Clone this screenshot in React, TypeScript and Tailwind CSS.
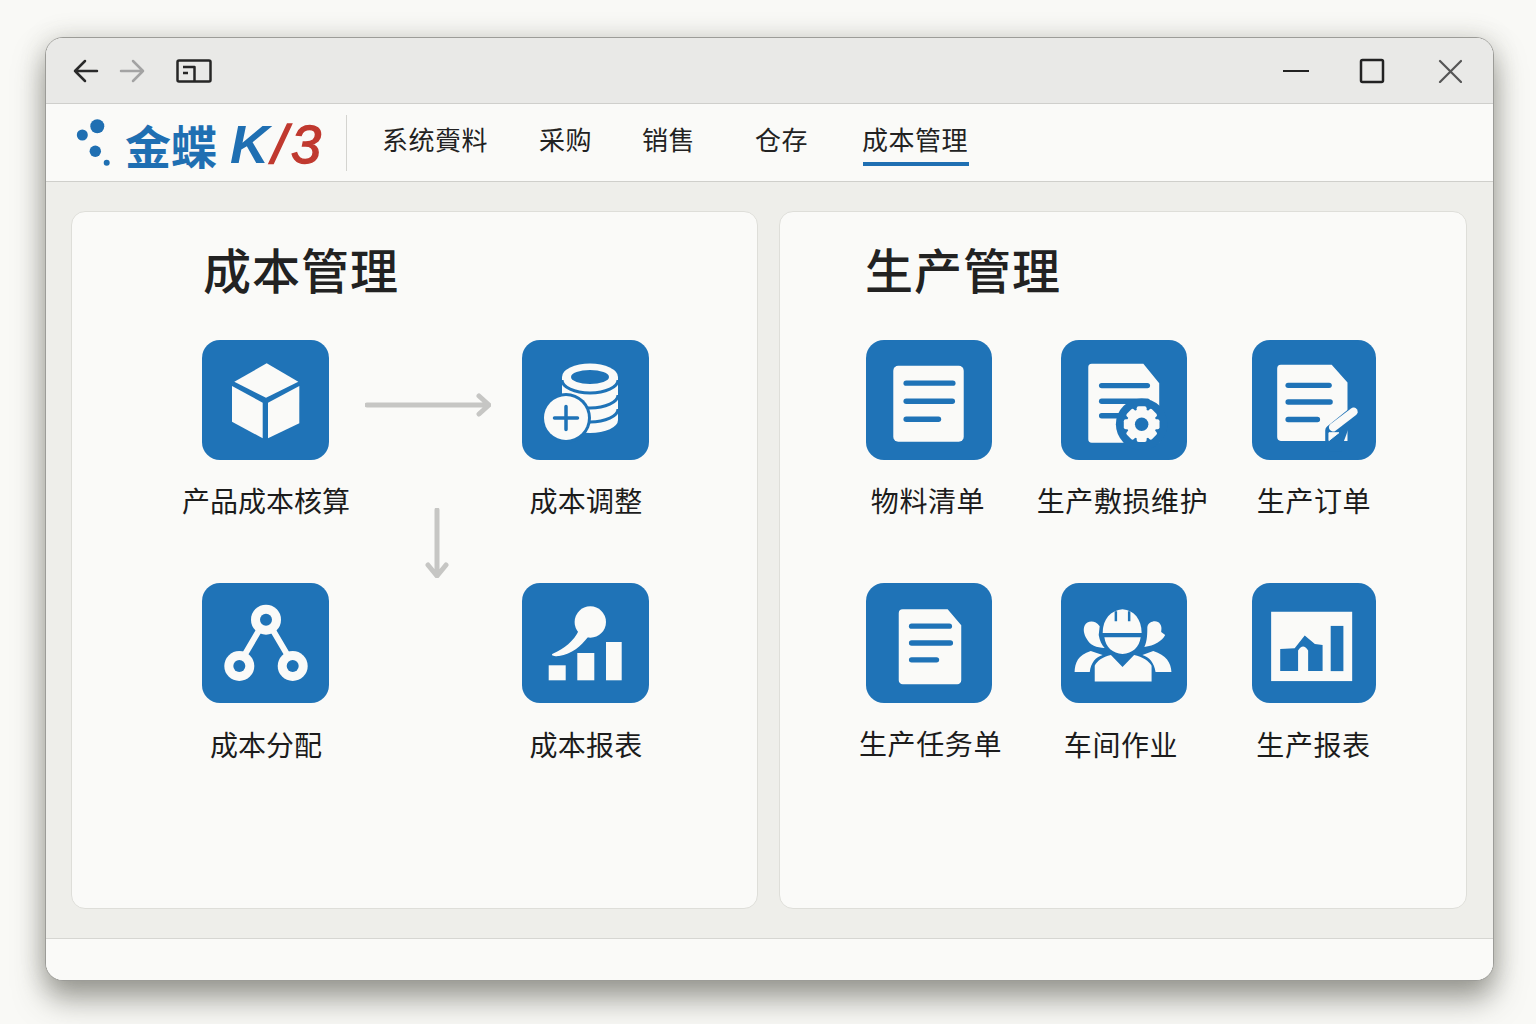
import type { ReactNode } from "react";

const BLUE = "#1f73b7";
const WHITE = "#fafaf8";

const DocLines = ({ x, ys, ends }: { x: number; ys: number[]; ends: number[] }) => (
  <>
    {ys.map((y, i) => (
      <line key={i} x1={x} y1={y} x2={ends[i]} y2={y} stroke={BLUE} strokeWidth="5.5" strokeLinecap="round" />
    ))}
  </>
);

const CubeIcon = () => (
  <g fill={WHITE}>
    <path d="M64.7 23.3 96.3 41.7 64 57.7 32.3 41.7Z" />
    <path d="M30 46 60.7 62.7V98.3L30 81.7Z" />
    <path d="M66 62.7 97.3 46V83.3L66 98.3Z" />
  </g>
);

const DatabaseIcon = () => (
  <>
    <path d="M40 37V80A28 13 0 0 0 96 80V37Z" fill={WHITE} />
    <ellipse cx="68" cy="37" rx="28" ry="13.5" fill={WHITE} />
    <ellipse cx="68" cy="37" rx="19" ry="7" fill={BLUE} />
    <g fill="none" stroke={BLUE} strokeWidth="3">
      <path d="M40 40A28 13 0 0 0 96 40" />
      <path d="M40 55A28 13 0 0 0 96 55" />
      <path d="M40 69A28 13 0 0 0 96 69" />
    </g>
    <circle cx="44" cy="78" r="25" fill={BLUE} />
    <circle cx="44" cy="78" r="22" fill={WHITE} />
    <path d="M32.5 78H55.5M44 66.5V89.5" stroke={BLUE} strokeWidth="3.5" strokeLinecap="round" />
  </>
);

const GraphIcon = () => (
  <>
    <path d="M59 44 39 78M69 44 89 78" stroke={WHITE} strokeWidth="6" />
    {[
      [64, 36.7],
      [37.3, 83],
      [90.7, 83],
    ].map(([cx, cy]) => (
      <g key={cx}>
        <circle cx={cx} cy={cy} r="15" fill={WHITE} />
        <circle cx={cx} cy={cy} r="6" fill={BLUE} />
      </g>
    ))}
  </>
);

const PinChartIcon = () => (
  <g fill={WHITE}>
    <circle cx="68.3" cy="39" r="15.7" />
    <path d="M57 47C52 58 42 66 30.7 70.7 28 72.5 33 73.5 37 73 50 71 59 63 66 54Z" />
    <rect x="26.7" y="82.3" width="17" height="15" />
    <rect x="55.3" y="70" width="17" height="27.3" />
    <rect x="84" y="59" width="15.7" height="38.3" />
  </g>
);

const ListIcon = () => (
  <>
    <rect x="27.5" y="25.5" width="71" height="76.5" rx="5" fill={WHITE} />
    <DocLines x={40.5} ys={[43, 61.3, 79.5]} ends={[87.5, 87, 73]} />
  </>
);

const GearDocIcon = () => (
  <>
    <path d="M31 23.4H83L99 43V103H31A3.5 3.5 0 0 1 27.5 99.5V27A3.5 3.5 0 0 1 31 23.4Z" fill={WHITE} />
    <DocLines x={41} ys={[45.5, 61.3, 75.8]} ends={[87, 87, 70]} />
    <circle cx="81.3" cy="84.4" r="26" fill={BLUE} />
    <g fill={WHITE}>
      {[0, 45, 90, 135, 180, 225, 270, 315].map((a) => (
        <rect key={a} x="76.3" y="66.4" width="10" height="8" rx="2" transform={`rotate(${a} 81.3 84.4)`} />
      ))}
      <circle cx="81.3" cy="84.4" r="15" />
    </g>
    <circle cx="81.3" cy="84.4" r="6.8" fill={BLUE} />
  </>
);

const PenDocIcon = () => (
  <>
    <path d="M29.5 24H81.6L97.8 42V102H29.5A4 4 0 0 1 25.8 98V28A4 4 0 0 1 29.5 24Z" fill={WHITE} />
    <DocLines x={37} ys={[45, 62, 80]} ends={[79, 80, 67]} />
    <path d="M106 70 80 91V108H92" fill={BLUE} stroke={BLUE} strokeWidth="10" strokeLinejoin="round" />
    <path d="M104 72 83 88" stroke={WHITE} strokeWidth="8.5" strokeLinecap="round" />
    <path d="M78.8 101.6V93.5H89Z" fill={WHITE} stroke={WHITE} strokeWidth="1" strokeLinejoin="round" />
  </>
);

const SmallDocIcon = () => (
  <>
    <path d="M37 26H82.3L96 42V97.5A4 4 0 0 1 92 101.6H37A4 4 0 0 1 33 97.5V30A4 4 0 0 1 37 26Z" fill={WHITE} />
    <DocLines x={46} ys={[43, 60, 77]} ends={[84, 85, 71]} />
  </>
);

const WorkersIcon = () => (
  <>
    <g fill={WHITE}>
      <path d="M24 42C26 38 34 36 39 43L38 52C39 58 41 62 44 65 36 65 29 62 26 56 23 51 22 46 24 42Z" />
      <path d="M13.7 89.3C14 80 17 72 30 68L42 72C35 74 30 80 29 89.3Z" />
      <path d="M87 44C88 38 97 36 100 41 102 44 101 47 101 49L105 52C102 58 94 63 84 64 87 58 87 50 87 44Z" />
      <path d="M111.3 89.3C111 80 106 72 93 68L82 72C89 74 94 80 95.3 89.3Z" />
      <path d="M42 50C42 36 50 27 62 26 74 27 81 36 81.3 50Z" />
      <path d="M43.7 54.3H80.3C79 64 72 71 62 71 52 71 45 64 43.7 54.3Z" />
      <path d="M34 98.7V83C36 78 42 74 50.3 72L62 84.3 73.7 72C82 74 89 78 91.3 83V98.7Z" />
    </g>
    <path d="M55.3 28V38M68.7 28V38" stroke={BLUE} strokeWidth="2.5" />
  </>
);

const WindowChartIcon = () => (
  <>
    <rect x="19.6" y="28" width="83" height="71" fill={WHITE} />
    <g fill={BLUE}>
      <rect x="80.6" y="42.5" width="13" height="46.3" />
      <path d="M28.9 66.1 43.7 65.4 54 52.3 64.4 61 72.3 62V88.8H57.5V67.8Q52.3 59.2 47.2 67.8V88.8H28.9Z" />
    </g>
  </>
);

const Tile = ({ icon, label, labelClass = "", w = "w-[127px]" }: { icon: ReactNode; label: string; labelClass?: string; w?: string }) => (
  <div className="flex flex-col items-center">
    <div className={`${w} h-[120px] rounded-[18px] bg-[#1f73b7]`}>
      <svg viewBox="0 0 127 120" className="size-full">
        {icon}
      </svg>
    </div>
    <span className={`mt-[21px] whitespace-nowrap text-[28px] leading-[40px] text-[#1c1c1c] ${labelClass}`}>{label}</span>
  </div>
);

const navItems = [
  { label: "系统賫料", cls: "ml-[35px]" },
  { label: "采购", cls: "ml-[51px]" },
  { label: "销售", cls: "ml-[50px]" },
  { label: "仓存", cls: "ml-[60px]" },
  { label: "成本管理", cls: "ml-[54px]", active: true },
];

export default function App() {
  return (
    <div className="h-screen overflow-hidden bg-[#f9f9f6] pl-[45px] pt-[37px] font-['Noto_Sans_CJK_SC','Liberation_Sans',sans-serif]">
      <div className="flex h-[944px] w-[1449px] flex-col overflow-hidden rounded-[18px] border border-[#9c9c98] bg-[#fafaf8] shadow-[0_18px_30px_rgba(70,70,60,0.5),0_0_26px_rgba(70,70,60,0.18)]">
        {/* title bar */}
        <div className="flex h-[66px] shrink-0 items-center border-b border-[#cfcfcc] bg-[#e9e9e7]">
          <svg viewBox="0 0 26 24" className="ml-[27px] h-6 w-[26px]" fill="none" stroke="#2a2a2a" strokeWidth="2.5" strokeLinecap="round" strokeLinejoin="round">
            <path d="M24 12H2M12 2 2 12 12 22" />
          </svg>
          <svg viewBox="0 0 26 24" className="ml-[20px] h-6 w-[26px]" fill="none" stroke="#a3a3a3" strokeWidth="2.5" strokeLinecap="round" strokeLinejoin="round">
            <path d="M2 12H24M14 2 24 12 14 22" />
          </svg>
          <svg viewBox="0 0 36 24" className="ml-[31px] h-6 w-9" fill="none" stroke="#262626" strokeWidth="2.5" strokeLinejoin="round">
            <rect x="1.5" y="1.5" width="33" height="21" rx="1.5" />
            <path d="M7 8H18.5V22M7 14H12" />
          </svg>
          <svg viewBox="0 0 26 4" className="ml-auto h-1 w-[26px]" stroke="#222">
            <path d="M0 2H26" strokeWidth="2" />
          </svg>
          <svg viewBox="0 0 26 26" className="ml-[50px] h-[26px] w-[26px]" fill="none" stroke="#222" strokeWidth="2.5">
            <rect x="2" y="2" width="22" height="22" rx="1.5" />
          </svg>
          <svg viewBox="0 0 24 24" className="ml-[53px] mr-[31px] size-6" fill="none" stroke="#555" strokeWidth="2.2" strokeLinecap="round">
            <path d="M2 2 23 23M23 2 2 23" />
          </svg>
        </div>

        {/* menu bar */}
        <div className="flex h-[78px] shrink-0 items-center border-b border-[#cfcfcb] bg-[#fafaf8]">
          <svg viewBox="0 0 36 50" className="ml-[30px] h-[50px] w-9 shrink-0" fill="#1f6fb2">
            <circle cx="21.3" cy="8.3" r="7" />
            <circle cx="6.3" cy="17" r="5.5" />
            <circle cx="19.3" cy="33.3" r="5.7" />
            <circle cx="30.7" cy="44.7" r="3" />
          </svg>
          <div className="ml-[13px] mt-[3px] flex h-[56px] w-[221px] shrink-0 items-center whitespace-nowrap">
            <span className="text-[46px] font-bold leading-[56px] text-[#1f6fb2]">金蝶</span>
            <span className="ml-[13px] font-['Liberation_Sans',sans-serif] text-[54px] italic leading-[56px]">
              <span className="font-bold text-[#1f6fb2]">K</span>
              <span className="ml-[3px] text-[#c0392f] [-webkit-text-stroke:1.5px_#c0392f]">/</span>
              <span className="ml-[4px] text-[#c0392f] [-webkit-text-stroke:1.5px_#c0392f]">3</span>
            </span>
          </div>
          <div className="h-[56px] w-px shrink-0 bg-[#d4d4d0]" />
          {navItems.map((item) => (
            <div key={item.label} className={`relative mb-[8px] shrink-0 text-[26px] leading-[36px] tracking-[0.5px] text-[#222] ${item.cls}`}>
              {item.label}
              {item.active && <div className="absolute -bottom-[9px] left-px h-1 w-[106px] bg-[#1f6fb2]" />}
            </div>
          ))}
        </div>

        {/* panels */}
        <div className="flex h-[757px] shrink-0 gap-[21px] border-b border-[#d6d6d2] bg-[#eeeeea] pl-[25px] pt-[29px]">
          <div className="h-[698px] w-[687px] rounded-[14px] border border-[#deded9] bg-[#fafaf8] pt-[28px]">
            <h2 className="ml-[131px] text-[48px] font-medium leading-[56px] tracking-[1px] text-[#222]">成本管理</h2>
            <div className="ml-[110px] mt-[44px] grid grid-cols-[168px_156px_160px] grid-rows-[243px_243px]">
              <Tile icon={<CubeIcon />} label="产品成本核算" w="w-[127px] -ml-px" labelClass="-translate-y-px" />
              <svg viewBox="0 0 126 24" className="mt-[53px] h-6 w-[126px] justify-self-center" fill="none" stroke="#c6c6c4" strokeWidth="5" strokeLinecap="round" strokeLinejoin="round">
                <path d="M2 12H123M114 3 124 12 114 21" />
              </svg>
              <Tile icon={<DatabaseIcon />} label="成本调整" w="w-[127px] -ml-px" labelClass="-translate-y-px tracking-[0.3px]" />
              <Tile icon={<GraphIcon />} label="成本分配" w="w-[127px] -ml-px" />
              <svg viewBox="0 0 24 70" className="-mt-[75px] ml-[75px] h-[70px] w-6" fill="none" stroke="#c6c6c4" strokeWidth="5" strokeLinecap="round" strokeLinejoin="round">
                <path d="M12 2V67M3 57 12 68 21 57" />
              </svg>
              <Tile icon={<PinChartIcon />} label="成本报表" w="w-[127px] -ml-px" labelClass="tracking-[0.3px]" />
            </div>
          </div>

          <div className="h-[698px] w-[688px] rounded-[14px] border border-[#deded9] bg-[#fafaf8] pt-[28px]">
            <h2 className="ml-[85px] text-[48px] font-medium leading-[56px] tracking-[1px] text-[#222]">生产管理</h2>
            <div className="ml-[54px] mt-[44px] grid grid-cols-[190px_200px_180px] grid-rows-[243px_243px]">
              <Tile icon={<ListIcon />} label="物料清单" w="w-[126px]" labelClass="-ml-[2px] -translate-y-px tracking-[0.6px]" />
              <Tile icon={<GearDocIcon />} label="生产敷损维护" w="w-[126px]" labelClass="-ml-[3px] -translate-y-px tracking-[0.6px]" />
              <Tile icon={<PenDocIcon />} label="生产订单" w="w-[124px]" labelClass="-translate-y-px tracking-[0.6px]" />
              <Tile icon={<SmallDocIcon />} label="生产任务单" w="w-[126px]" labelClass="ml-[3px] -translate-y-px tracking-[0.6px]" />
              <Tile icon={<WorkersIcon />} label="车间作业" w="w-[126px]" labelClass="-ml-[6px] tracking-[0.6px]" />
              <Tile icon={<WindowChartIcon />} label="生产报表" w="w-[124px]" labelClass="-ml-px tracking-[0.6px]" />
            </div>
          </div>
        </div>

        {/* status bar */}
        <div className="flex-1 bg-[#fafaf8]" />
      </div>
    </div>
  );
}
